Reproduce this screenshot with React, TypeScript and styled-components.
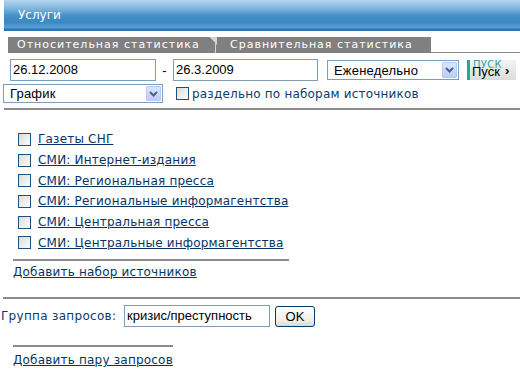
import React from "react";
import styled, { createGlobalStyle } from "styled-components";

const GlobalStyle = createGlobalStyle`
  html, body { margin: 0; padding: 0; background: #fff; }
  body { font-family: "DejaVu Sans", Verdana, sans-serif; font-size: 12px; letter-spacing: 0.2px; color: #0b3b6e; }
  * { box-sizing: border-box; }
`;

const Page = styled.div`
  width: 520px;
  height: 375px;
  overflow: hidden;
  padding-left: 4px;
`;

const Header = styled.div`
  height: 31px;
  display: flex;
  align-items: center;
  padding-left: 14px;
  padding-bottom: 1px;
  color: #fff;
  font-size: 12px;
  letter-spacing: 0;
  background: linear-gradient(#b6d7ee 0%, #7ab2dc 30%, #4590c6 50%, #3c88c1 72%, #5d9fd2 90%, #2a78b8 93%, #2a78b8 100%);
`;

const TabsRow = styled.div`
  display: flex;
  margin-top: 6px;
  margin-left: 4px;
  height: 16px;
`;

const Tab = styled.div<{ $w: number; $pl: number }>`
  width: ${(p) => p.$w}px;
  padding-left: ${(p) => p.$pl}px;
  background: #808080;
  color: #fff;
  font-size: 11px;
  letter-spacing: 1px;
  line-height: 16px;
  white-space: nowrap;
  overflow: hidden;
`;

const Notch = styled.div`
  width: 7px;
  background:
    linear-gradient(to right, transparent 5px, #d6d3cb 5px, #d6d3cb 6px, transparent 6px),
    linear-gradient(to bottom left, #d6d3cb 50%, transparent 51%) top / 7px 8px no-repeat,
    #808080;
`;

const TabFiller = styled.div`
  flex: 1;
  border-bottom: 1px solid #8a8a8a;
`;

const Row = styled.div<{ $mt: number; $h: number; $pl?: number }>`
  display: flex;
  align-items: center;
  margin-top: ${(p) => p.$mt}px;
  height: ${(p) => p.$h}px;
  padding-left: ${(p) => p.$pl ?? 0}px;
`;

const TextInput = styled.div<{ $w: number }>`
  width: ${(p) => p.$w}px;
  height: 22px;
  border: 1px solid #7f9db9;
  background: #fff;
  font-family: "Liberation Sans", Arial, sans-serif;
  font-size: 13px;
  letter-spacing: 0;
  color: #000;
  padding-left: 2px;
  line-height: 20px;
  white-space: nowrap;
  overflow: hidden;
`;

const Dash = styled.span`
  width: 17px;
  text-align: center;
  color: #000;
  font-family: "Liberation Sans", Arial, sans-serif;
  font-size: 13px;
`;

const Select = styled.div<{ $w: number; $h: number; $ml: number }>`
  display: flex;
  align-items: center;
  justify-content: space-between;
  width: ${(p) => p.$w}px;
  height: ${(p) => p.$h}px;
  margin-left: ${(p) => p.$ml}px;
  border: 1px solid #7f9db9;
  background: #fff;
  padding: 1px 1px 1px 6px;
  font-family: "Liberation Sans", Arial, sans-serif;
  font-size: 13px;
  letter-spacing: 0.2px;
  color: #000;
`;

const SelectArrow = styled.span`
  width: 15px;
  height: 100%;
  display: flex;
  align-items: center;
  justify-content: center;
  background: linear-gradient(#dbe6fd, #b9cdf9);
  border: 1px solid #b5c8f2;
  border-radius: 1px;
`;

const Chevron = () => (
  <svg width="9" height="6" viewBox="0 0 9 6">
    <path d="M1 1 L4.5 4.5 L8 1" fill="none" stroke="#4d6185" strokeWidth="2" />
  </svg>
);

const PuskButton = styled.div`
  position: relative;
  margin-left: 8px;
  width: 49px;
  height: 20px;
  background: linear-gradient(#f4f4f4, #dcdcdc);
  border-left: 3px solid #19b08e;
  display: flex;
  align-items: center;
  padding-left: 2px;
  font-family: "Liberation Sans", Arial, sans-serif;
  font-size: 13px;
  letter-spacing: 0;
  color: #000;
`;

const PuskGhost = styled.span`
  position: absolute;
  left: 3px;
  top: -1px;
  font-family: "DejaVu Sans", sans-serif;
  font-size: 10px;
  color: #3a9fa6;
  letter-spacing: 0.3px;
`;

const PuskLabel = styled.span`
  position: relative;
  margin-top: 3px;
`;

const PuskArrow = styled.span`
  position: relative;
  margin-left: 5px;
  margin-top: 1px;
  font-weight: bold;
  font-size: 13px;
`;

const Check = styled.span`
  width: 13px;
  height: 13px;
  flex: none;
  border: 1px solid #1c5180;
  background: linear-gradient(135deg, #dcdcd6, #f6f6f3 80%);
`;

const CheckLabel = styled.span`
  margin-left: 3px;
  color: #0b3b6e;
`;

const Rule = styled.div<{ $mt: number; $ml: number; $w?: number }>`
  height: 2px;
  background: #8c8c8c;
  margin-top: ${(p) => p.$mt}px;
  margin-left: ${(p) => p.$ml}px;
  width: ${(p) => (p.$w ? `${p.$w}px` : "auto")};
`;

const SourceList = styled.div`
  margin-top: 19px;
  padding-left: 14px;
  display: flex;
  flex-direction: column;
`;

const SourceItem = styled.div`
  display: flex;
  align-items: center;
  height: 20.7px;
  gap: 7px;
`;

const Link = styled.a`
  color: #073463;
  text-decoration: underline;
  white-space: nowrap;
  cursor: pointer;
`;

const LinkRow = styled.div<{ $mt: number }>`
  margin-top: ${(p) => p.$mt}px;
  padding-left: 9px;
  line-height: 18px;
`;

const GroupLabel = styled.span`
  margin-left: -3px;
  width: 123px;
  flex: none;
  color: #0b3b6e;
  letter-spacing: 0.3px;
  white-space: nowrap;
`;

const OkButton = styled.div`
  margin-left: 5px;
  width: 40px;
  height: 21px;
  border: 1px solid #003c74;
  border-radius: 3px;
  background: linear-gradient(#ffffff, #f0efe7 70%, #dcdad0);
  display: flex;
  align-items: center;
  justify-content: center;
  font-family: "Liberation Sans", Arial, sans-serif;
  font-size: 13px;
  letter-spacing: 0;
  color: #000;
`;

const sources = [
  "Газеты СНГ",
  "СМИ: Интернет-издания",
  "СМИ: Региональная пресса",
  "СМИ: Региональные информагентства",
  "СМИ: Центральная пресса",
  "СМИ: Центральные информагентства",
];

export default function App() {
  return (
    <>
      <GlobalStyle />
      <Page>
        <Header>Услуги</Header>
        <TabsRow>
          <Tab $w={202} $pl={9}>Относительная статистика</Tab>
          <Notch />
          <Tab $w={214} $pl={13}>Сравнительная статистика</Tab>
          <TabFiller />
        </TabsRow>
        <Row $mt={6} $h={22} $pl={6}>
          <TextInput $w={146}>26.12.2008</TextInput>
          <Dash>-</Dash>
          <TextInput $w={145}>26.3.2009</TextInput>
          <Select $w={132} $h={20} $ml={9}>
            Еженедельно
            <SelectArrow><Chevron /></SelectArrow>
          </Select>
          <PuskButton>
            <PuskGhost>ПУСК</PuskGhost>
            <PuskLabel>Пуск</PuskLabel>
            <PuskArrow>›</PuskArrow>
          </PuskButton>
        </Row>
        <Row $mt={3} $h={19}>
          <Select $w={160} $h={19} $ml={-1}>
            График
            <SelectArrow><Chevron /></SelectArrow>
          </Select>
          <Row $mt={0} $h={19} $pl={13}>
            <Check />
            <CheckLabel>раздельно по наборам источников</CheckLabel>
          </Row>
        </Row>
        <Rule $mt={5} $ml={0} />
        <SourceList>
          {sources.map((s) => (
            <SourceItem key={s}>
              <Check />
              <Link>{s}</Link>
            </SourceItem>
          ))}
        </SourceList>
        <Rule $mt={6} $ml={9} $w={276} />
        <LinkRow $mt={2}>
          <Link>Добавить набор источников</Link>
        </LinkRow>
        <Rule $mt={16} $ml={-1} />
        <Row $mt={6} $h={22}>
          <GroupLabel>Группа запросов:</GroupLabel>
          <TextInput $w={146}>кризис/преступность</TextInput>
          <OkButton>OK</OkButton>
        </Row>
        <Rule $mt={18} $ml={9} $w={160} />
        <LinkRow $mt={4}>
          <Link>Добавить пару запросов</Link>
        </LinkRow>
      </Page>
    </>
  );
}
